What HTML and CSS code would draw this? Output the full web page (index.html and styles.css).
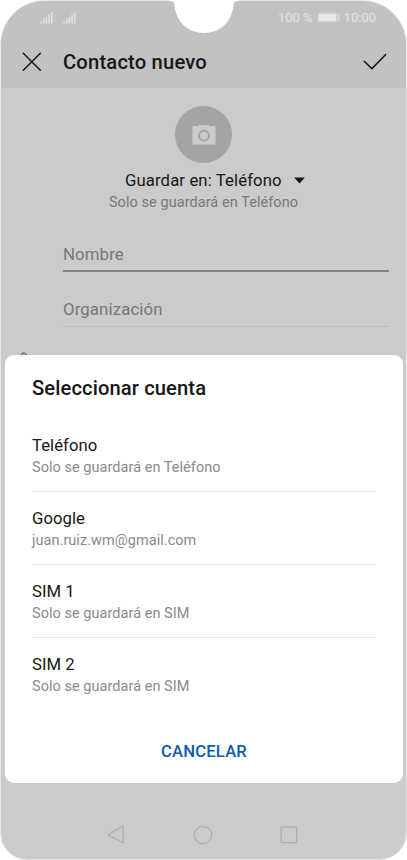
FILE: index.html
```html
<!DOCTYPE html>
<html lang="es">
<head>
<meta charset="utf-8">
<title>Contacto nuevo</title>
<link rel="stylesheet" href="styles.css">
</head>
<body>
<main class="phone">
  <header class="top">
    <div class="status">
      <svg class="signals" width="36" height="13" viewBox="0 0 36 13" fill="none" stroke="#e2e2e2" stroke-width="1.5">
        <path d="M1 12.5v-2M3.7 12.5V8M6.4 12.5V6M9.1 12.5V3.5M11.8 12.5V1M24 12.5v-2M26.7 12.5V8M29.4 12.5V6M32.1 12.5V3.5M34.8 12.5V1"/>
      </svg>
      <span class="percent">100 %</span>
      <svg class="battery" width="23" height="11" viewBox="0 0 23 11">
        <rect x=".5" y=".5" width="20" height="10" rx="1.5" fill="#d0d0d0"/>
        <rect x="2" y="2" width="17" height="7" fill="#e8e8e8"/>
        <path d="M21.8 2v7" stroke="#dcdcdc" stroke-width="1.4"/>
      </svg>
      <span class="time">10:00</span>
    </div>
    <div class="appbar">
      <svg width="20" height="20" viewBox="0 0 20 20" fill="none" stroke="#151515" stroke-width="1.5" stroke-linecap="round"><path d="M1.3 1.3l17 17M18.3 1.3l-17 17"/></svg>
      <h1>Contacto nuevo</h1>
      <svg width="24" height="18" viewBox="0 0 24 18" fill="none" stroke="#151515" stroke-width="1.5" stroke-linecap="round"><path d="M1.2 8.3l7.7 7.3L22.7 1.5"/></svg>
    </div>
  </header>
  <section class="contact">
    <div class="avatar">
      <svg width="24" height="20" viewBox="0 0 24 20"><path d="M1.2 1.1H5.5L7.6 0h8.6l2.1 1.1h4.4q.8 0 .8.8v16.9q0 .8-.8.8H1.2q-.8 0-.8-.8V1.9q0-.8.8-.8z" fill="#cbcbcb"/><circle cx="12" cy="10.7" r="4.9" fill="none" stroke="#a4a4a4" stroke-width="1.9"/></svg>
    </div>
    <div class="save"><span>Guardar en: Teléfono</span><svg width="11" height="7" viewBox="0 0 11 7"><path d="M.2.5h10.6L6 6q-.5.5-1 0z" fill="#151515"/></svg></div>
    <p class="hint">Solo se guardará en Teléfono</p>
    <div class="field active">Nombre</div>
    <div class="field">Organización</div>
    <svg class="phone-icon" width="10" height="6" viewBox="0 0 10 6" fill="none" stroke="#777" stroke-width="1.5"><path d="M1 5q0-4 3-4 1.5 0 3.5 4"/></svg>
  </section>
  <nav class="nav">
    <svg width="18" height="20" viewBox="0 0 18 20"><path d="M16.2 1.7v16.1L1.8 10.4q-.8-.6 0-1.2L15.5 1.4q.7-.3.7.3z"/></svg>
    <svg width="20" height="20" viewBox="0 0 20 20"><circle cx="10" cy="10" r="8.7"/></svg>
    <svg width="18" height="18" viewBox="0 0 18 18"><rect x="1.2" y="1.2" width="15.5" height="15.5" rx=".7"/></svg>
  </nav>
</main>
<svg class="notch" width="68" height="34" viewBox="0 0 68 34"><path d="M0 0H68V1Q63.5 1 63.5 5C62 22 50 33 34 33S6 22 4.5 5Q4.5 1 0 1Z" fill="#fff"/></svg>
<section class="dialog">
  <h2>Seleccionar cuenta</h2>
  <ul>
    <li><span class="name">Teléfono</span><span class="sub">Solo se guardará en Teléfono</span></li>
    <li><span class="name">Google</span><span class="sub">juan.ruiz.wm@gmail.com</span></li>
    <li><span class="name">SIM 1</span><span class="sub">Solo se guardará en SIM</span></li>
    <li><span class="name">SIM 2</span><span class="sub">Solo se guardará en SIM</span></li>
  </ul>
  <button type="button">CANCELAR</button>
</section>
</body>
</html>
```
FILE: styles.css
```css
* { box-sizing: border-box; }
body {
  margin: 0;
  width: 407px;
  height: 860px;
  padding: 1px 1px;
  background: #fff;
  font-family: Roboto, "Noto Sans", sans-serif;
  color: #171717;
  overflow: hidden;
  position: relative;
}
.phone {
  height: 858px;
  display: flex;
  flex-direction: column;
  background: #cbcbcb;
  border-radius: 44px 44px 26px 26px;
  overflow: hidden;
  box-shadow: 0 0 0 1px #e6e6e6;
}
.top { height: 87px; background: #c2c2c2; }
.status {
  height: 32px;
  display: flex;
  align-items: center;
  padding: 0 30px 0 39px;
  font-size: 13px;
  color: #e4e4e4;
}
.percent { margin-left: auto; }
.battery { margin: 0 4px 0 4px; }
.appbar {
  display: flex;
  align-items: center;
  height: 54px;
  margin-top: 2px;
  padding: 0 19px 0 21px;
}
h1 {
  margin: 0 auto 0 21px;
  font-size: 20.2px;
  font-weight: 500;
  letter-spacing: .18px;
}
.contact { flex: 1; }
.avatar {
  width: 57px;
  height: 57px;
  margin: 18px auto 0;
  border-radius: 50%;
  background: #a4a4a4;
  display: grid;
  place-items: center;
}
.save {
  display: flex;
  align-items: center;
  gap: 12px;
  height: 22px;
  margin: 6px 0 0 124px;
  font-size: 16.7px;
  letter-spacing: .12px;
}
.hint {
  margin: 0;
  height: 22px;
  line-height: 24px;
  text-align: center;
  font-size: 14.5px;
  letter-spacing: .06px;
  color: #797979;
}
.field {
  height: 55px;
  margin: 0 17px 0 62px;
  padding-top: 25px;
  border-bottom: 1px solid #bcbcbc;
  font-size: 16.8px;
  letter-spacing: .12px;
  line-height: 24px;
  color: #777;
}
.field.active {
  height: 58px;
  margin-top: 1px;
  padding-top: 28px;
  border-bottom: 2px solid #838383;
}
.phone-icon { display: block; margin: 25px 0 0 19px; }
.nav {
  height: 48px;
  display: flex;
  align-items: center;
  justify-content: space-between;
  padding: 0 108px 0 106px;
}
.nav svg { fill: none; stroke: #b0b0b0; stroke-width: 1.3; }
.notch { position: absolute; top: 0; left: 169.5px; }
.dialog {
  position: absolute;
  left: 5px;
  top: 355px;
  width: 398px;
  height: 428px;
  border-radius: 9px;
  background: #fff;
  padding: 19px 27px 0;
}
h2 {
  margin: 0;
  font-size: 20.2px;
  font-weight: 500;
  letter-spacing: .1px;
  line-height: 28px;
}
ul { list-style: none; margin: 17px 0 0; padding: 0; }
li {
  height: 73px;
  padding-top: 16px;
  border-bottom: 1px solid #e8e8e8;
}
li:last-child { border-bottom: 0; }
.name, .sub { display: block; line-height: 22px; }
.name { font-size: 16.7px; letter-spacing: .05px; }
.sub { font-size: 14.5px; letter-spacing: .04px; color: #8a8a8a; }
button {
  display: block;
  margin: 29px auto 0;
  padding: 0;
  border: 0;
  background: none;
  font: 500 16.6px/24px Roboto, sans-serif;
  letter-spacing: .2px;
  color: #0b5cad;
}
```
